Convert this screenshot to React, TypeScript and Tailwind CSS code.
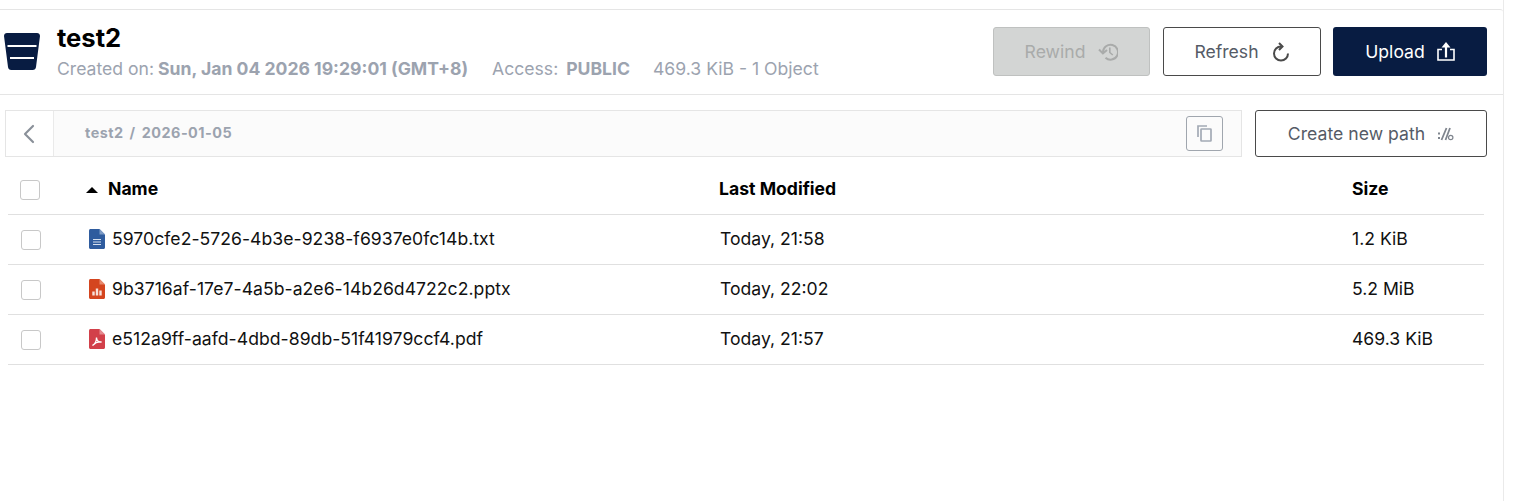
import { ChevronLeft } from "lucide-react";

const files = [
  { name: "5970cfe2-5726-4b3e-9238-f6937e0fc14b.txt", modified: "Today, 21:58", size: "1.2 KiB", kind: "txt" },
  { name: "9b3716af-17e7-4a5b-a2e6-14b26d4722c2.pptx", modified: "Today, 22:02", size: "5.2 MiB", kind: "pptx" },
  { name: "e512a9ff-aafd-4dbd-89db-51f41979ccf4.pdf", modified: "Today, 21:57", size: "469.3 KiB", kind: "pdf" },
];

function BucketIcon() {
  return (
    <svg width="36" height="37" viewBox="0 0 36 37" className="shrink-0">
      <path d="M0 3C0 1.300 1.300 0 3 0h30c1.700 0 3 1.300 3 3l-4 31c-.2 1.700-1.500 3-3.200 3H7.200C5.500 37 4.200 35.700 4 34z" fill="#081c42" />
      <rect x="3.500" y="12" width="29" height="2" fill="#ffffff" />
      <rect x="6" y="24" width="24" height="2" fill="#ffffff" />
    </svg>
  );
}

function RewindIcon() {
  return (
    <svg width="20" height="18" viewBox="0 0 20 18" fill="none" stroke="#a9abaa" strokeWidth="2">
      <path d="M5 9a7.500 7.500 0 1 1 2.500 5.800" />
      <path d="M1 6.500 4.900 10.500 9 7" />
      <path d="M11.800 4.500V9.500L14.800 12" strokeWidth="1.600" />
    </svg>
  );
}

function RefreshIcon() {
  return (
    <svg width="18" height="20" viewBox="0 0 18 20" fill="none" stroke="#4a4a4a" strokeWidth="2">
      <path d="M9 4.500a7 7 0 1 0 7 7" />
      <path d="M7 1 10.500 4.500 7 8" />
    </svg>
  );
}

function UploadIcon() {
  return (
    <svg width="18" height="19" viewBox="0 0 18 19" fill="none" stroke="#ffffff">
      <path d="M5 7.500H1v10.500h16V7.500h-4" strokeWidth="1.600" />
      <path d="M9 15.500V3" strokeWidth="2.200" />
      <path d="M9 0l4.500 5.500h-9z" fill="#ffffff" stroke="none" />
    </svg>
  );
}

function CopyIcon() {
  return (
    <svg width="15" height="17" viewBox="0 0 15 17" fill="none" stroke="#a3aab5" strokeWidth="1.700">
      <path d="M1 12V1h9" />
      <rect x="4" y="4" width="10" height="12" rx="0.500" />
    </svg>
  );
}

function PathIcon() {
  return (
    <svg width="17" height="14" viewBox="0 0 17 14" fill="none" stroke="#7f858e" strokeWidth="1.800">
      <path d="M1 6.500h2M1 11h2" strokeWidth="2" />
      <path d="M4.500 13 9.500 1M8.500 13 13 1" />
      <circle cx="13.700" cy="10.500" r="2.200" strokeWidth="1.200" />
    </svg>
  );
}

function FileIcon({ kind }: { kind: string }) {
  const color = kind === "txt" ? "#2f5c9e" : kind === "pptx" ? "#d4451f" : "#d2404a";
  const fold = kind === "txt" ? "#7d9bc6" : kind === "pptx" ? "#e88a6e" : "#e58a90";
  return (
    <svg width="16" height="20" viewBox="0 0 16 20" className="shrink-0">
      <path d="M1.500 0H10.500L16 5.500v13c0 .8-.7 1.500-1.500 1.500h-13C.7 20 0 19.300 0 18.500v-17C0 .7.700 0 1.500 0z" fill={color} />
      <path d="M10.500 0 16 5.500h-5.500z" fill={fold} />
      {kind === "txt" && (
        <path d="M4 10.500h8M4 13h8M4 15.500h8" stroke="#d5dfee" strokeWidth="1.200" />
      )}
      {kind === "pptx" && (
        <path d="M4.500 16.500V12.500M8 16.500V9.500M11.500 16.500V11.500" stroke="#f8e1da" strokeWidth="2.400" />
      )}
      {kind === "pdf" && (
        <path d="M3.500 16.500c2.500-1.500 4-5 4-8 0 3 2 5 5 4.500-3-.5-6 .5-9 3.500z" fill="none" stroke="#ffffff" strokeWidth="1.300" />
      )}
    </svg>
  );
}

function Checkbox() {
  return <div className="h-5 w-5 rounded-[3px] border border-[#c8c8c8] bg-white" />;
}

export default function App() {
  return (
    <main className="h-[501px] w-[1504px] overflow-hidden border-r border-[#eaeaea] bg-white pt-[9px] font-['Inter',sans-serif]">
      <header className="flex h-[86px] items-center justify-between rounded-tr-[3px] border-y border-[#e5e5e5] pr-4 pb-[1px] pl-1">
        <div className="flex items-center gap-[17px]">
          <BucketIcon />
          <div className="pt-[1px]">
            <h1 className="text-[25.6px] leading-[30px] font-bold text-black">test2</h1>
            <p className="mt-[4px] flex text-[17.6px] leading-[24px] text-[#9ca3af]">
              <span>
                Created on: <strong className="-ml-[1px] font-bold">Sun, Jan 04 2026 19:29:01 (GMT+8)</strong>
              </span>
              <span className="ml-[24px]">
                Access: <strong className="ml-[3px] font-bold">PUBLIC</strong>
              </span>
              <span className="ml-[23px]">469.3 KiB - 1 Object</span>
            </p>
          </div>
        </div>
        <div className="flex gap-3">
          <button className="mr-[1px] flex h-[49px] w-[157px] items-center justify-center gap-[13px] rounded-[3px] border border-[#bfc1c0] bg-[#d3d5d4] text-[17.6px] text-[#a9abaa]">
            <span className="pt-[2px]">Rewind</span>
            <RewindIcon />
          </button>
          <button className="flex h-[49px] w-[158px] items-center justify-center gap-[13px] rounded-[3px] border border-[#4a4a4a] bg-white text-[17.6px] text-[#555b66]">
            <span className="pt-[2px]">Refresh</span>
            <RefreshIcon />
          </button>
          <button className="flex h-[49px] w-[154px] items-center justify-center gap-3 rounded-[3px] bg-[#081c42] text-[17.6px] text-white">
            <span className="pt-[2px]">Upload</span>
            <UploadIcon />
          </button>
        </div>
      </header>

      <section className="mt-[15px] flex items-stretch justify-between pr-4 pl-[5px]">
        <div className="flex h-[47px] w-[1237px] border border-[#e5e5e5] bg-[#fbfbfb]">
          <div className="flex w-[48px] items-center justify-center border-r border-[#eaeaea] bg-white">
            <ChevronLeft size={32} strokeWidth={1.600} className="mr-[2px] text-[#8a9099]" />
          </div>
          <div className="flex flex-1 items-center justify-between pr-[18px] pl-[31px]">
            <span className="flex gap-[6px] pb-[2px] text-[14.4px] font-bold tracking-[0.5px] text-[#9ca3af]">
              <span>test2</span>
              <span>/</span>
              <span>2026-01-05</span>
            </span>
            <button className="flex h-[35px] w-[37px] items-center justify-center rounded-[3px] border border-[#a0a6ae] bg-[#fbfbfb]">
              <CopyIcon />
            </button>
          </div>
        </div>
        <button className="flex h-[47px] w-[232px] items-center justify-center gap-3 rounded-[3px] border border-[#4a4a4a] bg-white text-[17.6px] text-[#555b66]">
          <span className="pt-[2px] tracking-[0.03px]">Create new path</span>
          <PathIcon />
        </button>
      </section>

      <section className="mt-2 ml-2 w-[1476px]">
        <div className="grid h-[50px] grid-cols-[78px_633px_633px_1fr] items-center border-b border-[#e0e0e0] text-[17.6px] font-bold text-black">
          <div className="pl-3">
            <Checkbox />
          </div>
          <div className="flex items-center gap-[10px] pb-[1px]">
            <span className="mt-[2px] h-0 w-0 border-x-[6px] border-b-[6px] border-x-transparent border-b-black" />
            Name
          </div>
          <div className="pb-[1px]">Last Modified</div>
          <div className="pb-[1px]">Size</div>
        </div>
        {files.map((file) => (
          <div
            key={file.name}
            className="grid h-[50px] grid-cols-[78px_634px_632px_1fr] items-center border-b border-[#e0e0e0] text-[17.6px] text-[#111111]"
          >
            <div className="pl-[13px]">
              <Checkbox />
            </div>
            <div className="flex items-center gap-[7px] pl-[3px]">
              <FileIcon kind={file.kind} />
              <span className="pb-[1px] tracking-[0.04px]">{file.name}</span>
            </div>
            <div className="pb-[1px]">{file.modified}</div>
            <div className="pb-[1px]">{file.size}</div>
          </div>
        ))}
      </section>
    </main>
  );
}
